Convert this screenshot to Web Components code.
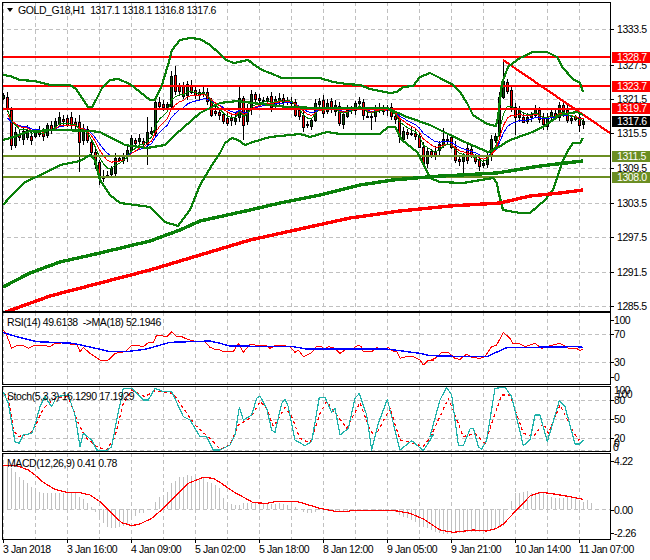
<!DOCTYPE html>
<html>
<head>
<meta charset="utf-8">
<style>
  html, body { margin: 0; background: #fff; }
  price-pane { --legend-pad: 1px 0 0 4px; }
  stoch-pane, macd-pane { margin-top: 1px; }
</style>
</head>
<body>
<mt-chart>
  <price-pane height="310">
    <svg slot="legend" width="6" height="4" viewBox="0 0 6 4"><path d="M0 0H6L3 4Z" fill="#000"/></svg>
    <span slot="legend">GOLD_G18,H1  1317.1 1318.1 1316.8 1317.6</span>
    <price-tag slot="tags" y="50" color="#ff0000">1328.7</price-tag>
    <price-tag slot="tags" y="79" color="#ff0000">1323.7</price-tag>
    <price-tag slot="tags" y="101" color="#ff0000">1319.7</price-tag>
    <price-tag slot="tags" y="114" color="#000000">1317.6</price-tag>
    <price-tag slot="tags" y="149" color="#6b8e23">1311.5</price-tag>
    <price-tag slot="tags" y="170" color="#6b8e23">1308.0</price-tag>
  </price-pane>
  <rsi-pane height="73"><span slot="legend">RSI(14) 49.6138  -&gt;MA(18) 52.1946</span></rsi-pane>
  <stoch-pane height="66"><span slot="legend">Stoch(5,3,3) 16.1290 17.1929</span></stoch-pane>
  <macd-pane height="87"><span slot="legend">MACD(12,26,9) 0.41 0.78</span></macd-pane>
  <time-axis>
    <span>3 Jan 2018</span><span>3 Jan 16:00</span><span>4 Jan 09:00</span><span>5 Jan 02:00</span><span>5 Jan 18:00</span>
    <span>8 Jan 12:00</span><span>9 Jan 05:00</span><span>9 Jan 21:00</span><span>10 Jan 14:00</span><span>11 Jan 07:00</span>
  </time-axis>
</mt-chart>

<script>
// candles: [bodyTop, bodyBottom, isRed], read off the reference at 3x
const R = 1, G = 0;
const seg1 = [[285,295,G],[290,325,R],[330,435,R],[397,437,G],[403,412,R],[392,417,G],[390,410,G],[408,420,R],[393,408,G],[392,400,R],[393,408,R],[375,405,G],[375,390,R],[362,385,G],[352,372,G],[358,365,R],[353,375,R],[350,375,R],[365,375,R],[365,425,R],[385,420,G],[388,422,R],[425,455,R],[455,490,R],[487,530,R],[527,533,R],[525,530,R],[505,522,G],[475,520,G],[475,480,R],[465,480,G],[450,468,G],[415,450,G],[420,430,R],[415,425,G],[422,432,R],[395,430,G],[392,398,G],[307,400,G],[307,320,R],[312,322,R],[312,320,G],[228,318,G],[225,272,R],[255,272,R],[258,288,R],[252,285,G],[255,275,R],[270,285,R],[275,285,R],[275,282,G],[275,302,R],[302,345,R],[332,338,R],[335,345,R]];
const seg2 = [[283,305,R],[293,307,R],[295,302,R],[295,305,G],[235,293,G],[235,317,R],[268,305,G],[222,268,G],[222,237,R],[235,242,R],[240,241,R],[235,243,G],[228,260,R],[237,258,G],[235,243,G],[235,248,R],[240,247,G],[245,248,G],[247,285,R],[270,288,R],[285,320,R],[312,316,G],[300,318,G],[250,300,G],[243,252,G],[240,278,R],[250,275,G],[243,268,R],[255,272,G],[258,308,R],[283,313,G],[270,288,G],[268,272,G],[250,270,G],[243,250,G],[247,287,R],[287,290,R],[288,290,G],[262,290,G],[265,272,R],[265,273,G],[262,270,G],[262,290,R],[288,298,R],[295,350,R],[333,357,G],[335,342,R],[338,340,R],[338,348,R],[348,380,R],[380,430,R],[393,430,G],[393,408,R]];
const seg3 = [[452,468,R],[433,452,G],[418,435,G],[418,422,R],[410,440,R],[440,478,R],[477,482,R],[467,482,G],[445,480,R],[448,470,R],[470,482,R],[477,497,R],[490,497,G],[465,492,G],[417,465,G],[407,420,G],[292,407,G],[243,290,G],[245,272,R],[270,320,R],[320,350,R],[325,352,G],[350,365,R],[350,362,G],[342,352,G],[328,345,G],[330,358,R],[355,372,R],[352,378,G],[337,352,G],[340,352,R],[316,352,G],[316,335,R],[330,360,R],[355,360,G],[352,358,R],[352,375,R],[362,372,G]];
// long wicks by bar index, in real pixels: [high, low]
const wicks = {19:[115,172],24:[160,185],36:[117,165],43:[66,0],59:[86,0],60:[0,140],62:[90,0],75:[0,132],92:[0,130],99:[0,143],110:[128,0],115:[0,173],124:[0,140],125:[59,0],128:[0,135],136:[0,130],144:[0,132]};
const candles = [
  ...seg1.map(c => [c[0] / 3, c[1] / 3, c[2]]),
  ...seg2.map(c => [20 + c[0] / 3, 20 + c[1] / 3, c[2]]),
  ...seg3.map(c => [c[0] / 3, c[1] / 3, c[2]])
];

const barX = i => 3 + 4 * i;
const pts = a => a.map(p => p[0] + ',' + p[1]).join(' ');
const line = (a, color, w, extra = '') => `<polyline points="${pts(a)}" fill="none" stroke="${color}" stroke-width="${w}" stroke-linejoin="round" ${extra}/>`;
const hline = (y, color, w, extra = '') => `<line x1="0" x2="700" y1="${y}" y2="${y}" stroke="${color}" stroke-width="${w}" ${extra}/>`;
const DASH = 'stroke-dasharray="4 3"';

// zoom crop coords back to page coords
const crop = (ox, oy, a) => a.map(p => [ox + p[0] / 3, oy + p[1] / 3]);

class ChartPane extends HTMLElement {
  constructor() {
    super();
    this.attachShadow({ mode: 'open' });
  }
  get grid() { return []; }
  get labels() { return []; }
  draw() { return ''; }
  connectedCallback() {
    const h = +this.getAttribute('height');
    const top = this.offsetTop;
    let vgrid = '';
    for (let x = 3; x < 610; x += 32) {
      vgrid += `<line x1="${x + .5}" x2="${x + .5}" y1="${top}" y2="${top + h}" stroke="#c0c0c0" ${DASH}/>`;
    }
    const hgrid = this.grid.map(y => hline(y + .5, '#c0c0c0', 1, DASH)).join('');
    const axis = this.labels.map(l => `
      ${l.noTick ? '' : `<i style="top:${l.y - top}px"></i>`}
      <b style="top:${l.y - top - 6}px;left:${l.x}px">${l.t}</b>`).join('');
    this.shadowRoot.innerHTML = `
      <style>
        :host { display: flex; height: ${h}px; }
        .plot { position: relative; width: 609px; box-sizing: border-box; border: 1px solid #000; overflow: hidden; }
        svg { position: absolute; left: 0; top: 0; width: 607px; height: ${h - 2}px; }
        .legend { position: relative; display: flex; align-items: center; gap: 5px; padding: var(--legend-pad, 3px 0 0 4px); line-height: 12px; white-space: pre; }
        .axis { position: relative; width: 39px; }
        .axis i { position: absolute; left: 0; width: 3px; height: 1px; background: #000; }
        .axis b { position: absolute; font-weight: normal; line-height: 12px; white-space: nowrap; }
      </style>
      <div class="plot">
        <svg viewBox="3 ${top + 1} 607 ${h - 2}" shape-rendering="crispEdges">${vgrid}${hgrid}${this.draw()}</svg>
        <div class="legend"><slot name="legend"></slot></div>
      </div>
      <div class="axis">${axis}<slot name="tags"></slot></div>`;
  }
}

class PricePane extends ChartPane {
  get grid() { return [29, 65, 99, 133, 168, 203, 237, 272, 306]; }
  get labels() {
    return [[29,'1333.5'],[65,'1327.5'],[99,'1321.5'],[133,'1315.5'],[168,'1309.5'],[203,'1303.5'],[237,'1297.5'],[272,'1291.5'],[306,'1285.5']]
      .map(l => ({ y: l[0], t: l[1], x: 6 }));
  }
  draw() {
    let bars = '';
    candles.forEach((c, i) => {
      const x = barX(i);
      const w = wicks[i] || [0, 0];
      const hi = w[0] || c[0] - 2 - (i * 7 % 11) / 3;
      const lo = w[1] || c[1] + 1.5 + (i * 5 % 13) / 3;
      bars += `<line x1="${x + .5}" x2="${x + .5}" y1="${hi}" y2="${lo}" stroke="#000"/>`;
      bars += `<rect x="${x - .5}" y="${Math.round(c[0]) + .5}" width="2" height="${Math.max(Math.round(c[1] - c[0]), 1)}" fill="${c[2] ? '#ff0000' : '#0b4f0b'}" stroke="#000"/>`;
    });

    // thin moving averages follow the closes
    const ema = (n, seed) => {
      let v = seed;
      const k = 2 / (n + 1);
      return candles.map((c, i) => {
        v += ((c[2] ? c[1] : c[0]) - v) * k;
        return [barX(i) + .5, +v.toFixed(1)];
      }).slice(1);
    };

    const upper = [[3,75],[10,76],[20,80],[35,81],[50,85],[70,85],[76,89],[82,98],[88,107],[92,107],[96,100],[102,88],[110,80],[118,79],[130,84],[140,92],[150,100],[155,100],[162,85],[168,65],[172,50],[180,40],[190,38],[200,39],[210,45],[220,54],[226,60],[234,63],[248,60],[256,66],[262,70],[270,73],[282,78],[320,78],[333,82],[347,84],[360,85],[370,89],[390,93],[397,92],[403,87],[413,86],[420,77],[430,73],[440,78],[453,85],[460,92],[467,103],[473,115],[487,124],[496,126],[498,117],[502,83],[508,67],[520,58],[533,52],[547,52],[557,57],[563,68],[573,79],[580,83],[583,92]];
    const middle = [[3,140],[10,138],[30,131],[60,130],[90,131],[100,132],[125,145],[147,148],[165,145],[175,135],[200,113],[220,103],[237,101],[253,103],[287,107],[320,108],[387,108],[407,117],[430,125],[450,135],[467,143],[488,152],[497,148],[510,140],[530,133],[543,127],[560,115],[577,112],[583,115]];
    const lower = [[3,205],[10,197],[25,182],[45,173],[60,165],[80,161],[90,155],[95,160],[100,180],[110,195],[120,203],[135,205],[150,207],[165,222],[178,226],[190,210],[200,185],[212,165],[220,153],[225,143],[232,138],[238,140],[245,145],[253,142],[270,137],[300,134],[310,137],[327,132],[340,134],[380,134],[388,127],[395,127],[402,140],[417,152],[423,163],[430,178],[440,182],[463,183],[493,178],[497,183],[498,190],[503,210],[520,213],[530,213],[545,200],[553,190],[562,163],[567,152],[573,143],[580,143],[583,138]];
    const slowGreen = [[3,287],[30,273],[60,262],[100,253],[150,241],[180,230],[200,221],[250,210],[280,203],[320,195],[360,185],[393,180],[433,176.5],[497,173],[540,166],[583,161]];
    const slowRed = [[3,313],[50,296],[100,283],[150,270],[200,255],[250,240],[300,229],[350,218],[400,211],[450,206],[500,203],[530,196],[560,193],[583,190]];

    return hline(121.5, '#c0c0c0', 1.4)
      + bars
      + line(ema(12, 124), '#0000ff', 1)
      + line(ema(8, 122), '#ff0000', 1)
      + line(ema(5, 118), '#008000', 1)
      + hline(57, '#ff0000', 2) + hline(86, '#ff0000', 2) + hline(109, '#ff0000', 2)
      + hline(156, '#6b8e23', 2) + hline(177, '#6b8e23', 2)
      + line([[503,60],[610,133]], '#ff0000', 2.2)
      + line(upper, '#0a800a', 2.2) + line(middle, '#0a800a', 2.2) + line(lower, '#0a800a', 2.2)
      + line(slowGreen, '#0a800a', 3.4)
      + line(slowRed, '#ff0000', 3.4);
  }
}

class RsiPane extends ChartPane {
  get grid() { return [334, 362]; }
  get labels() {
    return [[319.5,'100'],[334,'70'],[362,'30'],[377,'0']].map(l => ({ y: l[0], t: l[1], x: 3 }));
  }
  draw() {
    const rsi = [
      ...crop(0, 300, [[10,90],[20,105],[35,145],[50,137],[70,137],[85,145],[100,137],[130,135],[150,140],[165,130],[200,128],[220,135],[230,130],[240,155],[250,142],[270,160],[300,180],[325,180],[345,160],[375,155],[395,137],[415,137],[430,140],[445,128],[460,128],[470,105],[500,110],[515,95],[530,110],[545,110],[560,117],[590,125],[615,125],[630,142],[645,148]]),
      ...crop(220, 300, [[0,150],[10,155],[40,155],[55,130],[70,157],[90,132],[105,135],[135,135],[150,145],[165,137],[190,137],[210,140],[225,157],[235,150],[250,170],[275,158],[290,138],[305,140],[310,150],[325,140],[345,145],[360,160],[380,147],[400,145],[415,135],[425,140],[430,155],[455,155],[470,143],[490,147],[505,143],[515,152],[530,155],[540,175],[560,170],[580,170],[600,180],[610,195],[625,180],[640,182]]),
      ...crop(430, 300, [[0,182],[15,175],[35,158],[55,157],[75,175],[90,178],[110,162],[125,172],[150,175],[165,170],[185,140],[200,135],[220,97],[240,115],[250,132],[265,130],[285,140],[315,130],[335,145],[360,137],[390,130],[415,145],[440,145],[450,152],[460,147]])
    ];
    const ma = [
      ...crop(0, 300, [[10,98],[50,110],[110,125],[220,130],[300,148],[330,155],[380,155],[440,147],[510,127],[630,123]]),
      ...crop(220, 300, [[0,130],[30,138],[220,140],[260,147],[500,147],[600,160]]),
      ...crop(430, 300, [[0,167],[120,170],[170,170],[230,143],[440,140],[460,142]])
    ];
    return line(rsi, '#ff0000', 1) + line(ma, '#0000ff', 1.4);
  }
}

class StochPane extends ChartPane {
  get grid() { return [400, 419, 438, 450]; }
  get labels() {
    return [
      { y: 390, t: '100', x: 3, noTick: true },
      { y: 393.5, t: '100', x: 5, noTick: true },
      { y: 400, t: '80', x: 3 },
      { y: 419, t: '50', x: 3 },
      { y: 438, t: '20', x: 3 },
      { y: 443, t: '0', x: 3, noTick: true },
      { y: 447, t: '0', x: 2, noTick: true }
    ];
  }
  draw() {
    const main = [
      ...crop(0, 300, [[10,275],[25,310],[45,425],[57,430],[70,405],[95,400],[105,375],[120,320],[135,290],[155,320],[170,290],[205,285],[225,345],[240,440],[250,400],[275,420],[290,450],[320,452],[335,440],[350,360],[370,265],[395,265],[430,300],[445,300],[465,265],[490,275],[515,275],[550,350],[570,360],[600,410],[620,410],[640,450]]),
      ...crop(220, 300, [[0,450],[30,435],[45,405],[58,322],[70,360],[95,345],[110,295],[120,288],[140,325],[155,390],[165,397],[185,310],[195,298],[205,320],[225,420],[255,437],[275,425],[298,292],[315,292],[335,337],[345,325],[360,405],[385,385],[405,295],[418,280],[440,345],[455,450],[475,370],[502,298],[520,370],[540,450],[575,422],[610,452],[640,405]]),
      ...crop(430, 300, [[0,410],[30,300],[50,262],[65,285],[85,435],[100,437],[120,387],[130,385],[145,440],[155,448],[170,420],[195,265],[225,262],[245,290],[280,437],[300,420],[315,345],[330,345],[352,425],[388,302],[405,320],[435,432],[450,432],[460,420]])
    ];
    const signal = [
      ...crop(0, 300, [[10,280],[25,290],[40,390],[55,410],[90,400],[105,380],[130,325],[165,295],[205,290],[235,370],[255,410],[290,440],[320,450],[345,410],[370,310],[395,270],[435,290],[465,272],[520,280],[550,325],[585,375],[640,425]]),
      ...crop(220, 300, [[0,448],[30,435],[55,375],[90,355],[120,305],[140,325],[160,380],[195,322],[215,350],[240,415],[270,430],[300,340],[320,305],[350,345],[380,385],[420,308],[450,390],[465,410],[510,325],[540,420],[570,427],[610,440],[640,400]]),
      ...crop(430, 300, [[0,415],[25,360],[55,295],[75,345],[100,410],[135,400],[165,430],[185,370],[215,285],[240,285],[280,400],[310,410],[340,370],[355,400],[390,315],[430,395],[445,420],[460,418]])
    ];
    return line(signal, '#ff0000', 1.2, 'stroke-dasharray="3 3"') + line(main, '#20b2aa', 1.2);
  }
}

class MacdPane extends ChartPane {
  get grid() { return [509]; }
  get labels() {
    return [[460.5,'4.22'],[509.5,'0.00'],[532.5,'-2.26']].map(l => ({ y: l[0], t: l[1], x: 3 }));
  }
  draw() {
    const BASE = 178;
    const tops = [45,50,55,65,80,90,100,112,115,125,128,130,130,130,130,128,125,125,130,140,148,158,170,185,210,220,232,235,235,232,228,222,205,198,190,190,180,178,155,140,135,125,98,92,82,82,76,78,82,85,85,95,100,105,115,
      145,158,163,165,165,160,158,158,158,158,160,160,162,162,160,162,165,168,170,178,185,190,190,185,180,182,182,183,185,185,185,182,182,180,180,180,180,180,180,180,180,180,180,185,195,200,205,210,215,220,230,235,240,
      245,250,252,253,252,250,250,248,246,245,245,245,245,242,240,235,232,228,178,152,130,128,125,123,130,135,130,130,135,140,145,145,143,140,140,145,150,155,150,160];
    const hist = tops.map((t, i) => {
      const x = barX(i) + .5;
      return `<line x1="${x}" x2="${x}" y1="${450 + BASE / 3}" y2="${450 + t / 3}" stroke="#c0c0c0"/>`;
    }).join('');
    const signal = [
      ...crop(0, 450, [[8,47],[50,47],[85,60],[105,75],[130,97],[165,118],[200,127],[235,127],[270,135],[300,155],[330,185],[365,218],[395,227],[420,222],[455,205],[490,175],[525,140],[565,100],[610,82],[640,85]]),
      ...crop(220, 450, [[0,97],[40,125],[100,158],[140,160],[170,154],[230,154],[300,175],[345,184],[385,184],[395,181],[520,181],[570,190],[610,207],[660,240]]),
      ...crop(430, 450, [[30,240],[70,247],[130,240],[170,243],[200,235],[220,222],[260,180],[300,138],[330,127],[360,130],[420,140],[458,148]])
    ];
    return hist + line(signal, '#ff0000', 1.2);
  }
}

class PriceTag extends HTMLElement {
  constructor() {
    super();
    this.attachShadow({ mode: 'open' });
    this.shadowRoot.innerHTML = `
      <style>
        :host { position: absolute; left: 1px; width: 38px; height: 11px; box-sizing: border-box; padding-left: 5px; color: #fff; line-height: 11px; }
      </style>
      <slot></slot>`;
  }
  connectedCallback() {
    this.style.top = this.getAttribute('y') + 'px';
    this.style.background = this.getAttribute('color');
  }
}

class TimeAxis extends HTMLElement {
  constructor() {
    super();
    this.attachShadow({ mode: 'open' });
    const labels = Array.from(this.children);
    labels.forEach((el, i) => el.slot = 't' + i);
    this.shadowRoot.innerHTML = `
      <style>
        :host { display: grid; grid-template-columns: repeat(10, 64px); padding-left: 1px; height: 18px; }
        .cell { white-space: nowrap; line-height: 12px; }
        .cell::before { content: ''; display: block; width: 1px; height: 3px; background: #000; }
      </style>
      ${labels.map((_, i) => `<div class="cell"><slot name="t${i}"></slot></div>`).join('')}`;
  }
}

class MtChart extends HTMLElement {
  constructor() {
    super();
    this.attachShadow({ mode: 'open' });
    this.shadowRoot.innerHTML = `
      <style>
        :host { display: flex; flex-direction: column; width: 650px; height: 560px; box-sizing: border-box; padding: 2px 0 0 2px; overflow: hidden; background: #fff; color: #000; font: 10.5px/12px "Liberation Sans", sans-serif; letter-spacing: -.42px; }
      </style>
      <slot></slot>`;
  }
}

customElements.define('mt-chart', MtChart);
customElements.define('price-tag', PriceTag);
customElements.define('time-axis', TimeAxis);
customElements.define('price-pane', PricePane);
customElements.define('rsi-pane', RsiPane);
customElements.define('stoch-pane', StochPane);
customElements.define('macd-pane', MacdPane);
</script>
</body>
</html>
